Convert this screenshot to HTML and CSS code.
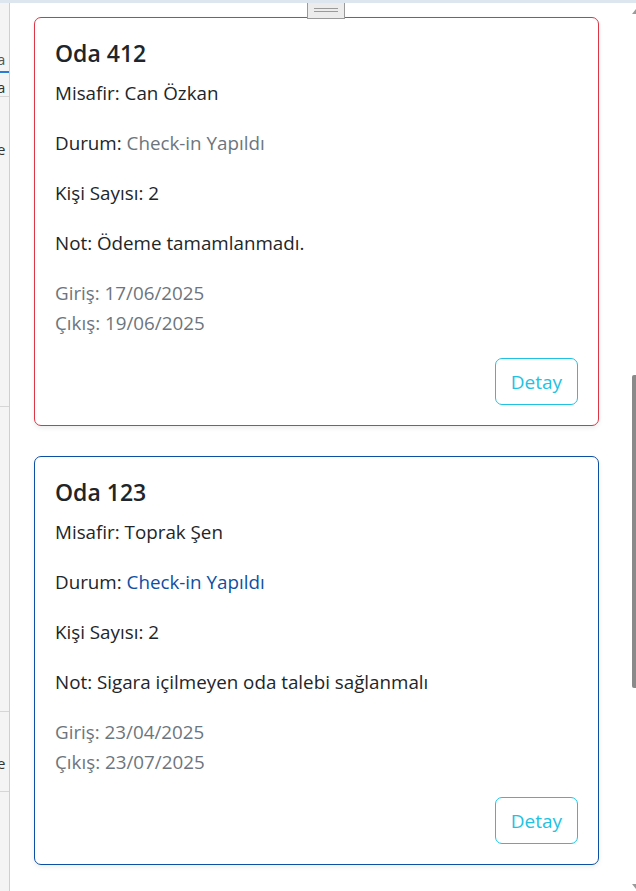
FILE: index.html
```html
<!DOCTYPE html>
<html lang="tr">
<head>
    <meta charset="UTF-8">
    <meta name="viewport" content="width=device-width, initial-scale=1.0">
    <title>Rezervasyonlar</title>
    <link rel="stylesheet" href="styles.css">
</head>
<body>
    <div class="page">
        <!-- underlying page, mostly hidden behind the panel -->
        <aside class="behind">
            <span class="frag frag-tab">a</span>
            <span class="frag frag-a">a</span>
            <span class="frag frag-e">e</span>
            <span class="rule rule-1"></span>
            <span class="rule rule-2"></span>
            <span class="rule rule-3"></span>
            <span class="frag frag-e2">e</span>
            <span class="rule rule-4"></span>
        </aside>

        <main class="panel">
            <div class="handle"></div>

            <div class="room-card card-danger">
                <h5 class="room-title">Oda 412</h5>
                <p>Misafir: Can Özkan</p>
                <p>Durum: <span class="status-muted">Check-in Yapıldı</span></p>
                <p>Kişi Sayısı: 2</p>
                <p>Not: Ödeme tamamlanmadı.</p>
                <p class="dates">Giriş: 17/06/2025<br>Çıkış: 19/06/2025</p>
                <div class="card-actions">
                    <button class="btn-detail">Detay</button>
                </div>
            </div>

            <div class="room-card card-primary">
                <h5 class="room-title">Oda 123</h5>
                <p>Misafir: Toprak Şen</p>
                <p>Durum: <span class="status-primary">Check-in Yapıldı</span></p>
                <p>Kişi Sayısı: 2</p>
                <p>Not: Sigara içilmeyen oda talebi sağlanmalı</p>
                <p class="dates">Giriş: 23/04/2025<br>Çıkış: 23/07/2025</p>
                <div class="card-actions">
                    <button class="btn-detail">Detay</button>
                </div>
            </div>

            <!-- scrollbar -->
            <div class="scrollbar">
                <span class="arrow arrow-up"></span>
                <span class="thumb"></span>
                <span class="arrow arrow-down"></span>
            </div>
        </main>
    </div>
</body>
</html>
```

FILE: styles.css
```css
* {
    margin: 0;
    padding: 0;
    box-sizing: border-box;
}

body {
    font-family: 'Open Sans', 'Noto Sans', sans-serif;
    color: #212529;
    background-color: #ffffff;
    height: 891px;
    overflow: hidden;
}

.page {
    display: flex;
    height: 891px;
    border-top: 3px solid #dde6ee;
}

/* Left strip of the page behind */
.behind {
    position: relative;
    width: 10px;
    flex-shrink: 0;
    background-color: #f4f4f4;
    border-right: 1px solid #cfcfcf;
    overflow: hidden;
    font-size: 15px;
    color: #333;
}

.frag {
    position: absolute;
    left: -3px;
}

.frag-tab {
    top: 46px;
    color: #555;
}

.frag-tab::after {
    content: '';
    position: absolute;
    left: 0;
    top: 22px;
    width: 14px;
    height: 2px;
    background-color: #2a7bd3;
}

.frag-a { top: 74px; }
.frag-e { top: 136px; }
.frag-e2 { top: 750px; }

.rule {
    position: absolute;
    left: 0;
    width: 10px;
    height: 1px;
    background-color: #d6d6d6;
}

.rule-1 { top: 93px; }
.rule-2 { top: 403px; }
.rule-3 { top: 708px; }
.rule-4 { top: 788px; }

/* Main panel */
.panel {
    position: relative;
    flex: 1;
    padding: 14px 37px 0 24px;
}

.handle {
    position: absolute;
    top: 0;
    left: 297px;
    width: 38px;
    height: 16px;
    background-color: #ececec;
    border: 1px solid #9a9a9a;
    border-top: none;
}

.handle::before,
.handle::after {
    content: '';
    position: absolute;
    left: 6px;
    right: 6px;
    height: 1px;
    background-color: #9a9a9a;
}

.handle::before { top: 5px; }
.handle::after { top: 8px; }

.room-card {
    border: 1px solid;
    border-radius: 7px;
    padding: 20px;
    margin-bottom: 30px;
    background-color: #fff;
    box-shadow: 0 2px 5px rgba(0, 0, 0, 0.075);
}

.card-danger { border-color: #dc3545; }
.card-primary { border-color: #0d4fa3; }

.room-title {
    font-size: 23px;
    font-weight: 600;
    line-height: 30px;
    margin-bottom: 10px;
}

.room-card p {
    font-size: 18.8px;
    line-height: 30px;
    margin-bottom: 20px;
}

.status-muted { color: #6c757d; }
.status-primary { color: #0d4fa3; }

.room-card .dates {
    color: #6c757d;
}

.card-actions {
    display: flex;
    justify-content: flex-end;
}

.btn-detail {
    font-family: inherit;
    font-size: 19px;
    line-height: 30px;
    padding: 7.5px 15px;
    color: #1fc2e2;
    background-color: transparent;
    border: 1px solid #1fc2e2;
    border-radius: 7px;
    cursor: pointer;
}

/* Scrollbar */
.scrollbar {
    position: absolute;
    top: 0;
    right: 0;
    width: 6px;
    height: 888px;
}

.thumb {
    position: absolute;
    top: 372px;
    right: 0;
    width: 4px;
    height: 313px;
    background-color: #8a8a8a;
    border-radius: 2px 0 0 2px;
}

.arrow {
    position: absolute;
    right: 0;
    width: 0;
    height: 0;
    border-left: 4px solid transparent;
}

.arrow-up {
    top: 6px;
    border-bottom: 5px solid #9a9a9a;
}

.arrow-down {
    bottom: 2px;
    border-top: 5px solid #9a9a9a;
}
```
